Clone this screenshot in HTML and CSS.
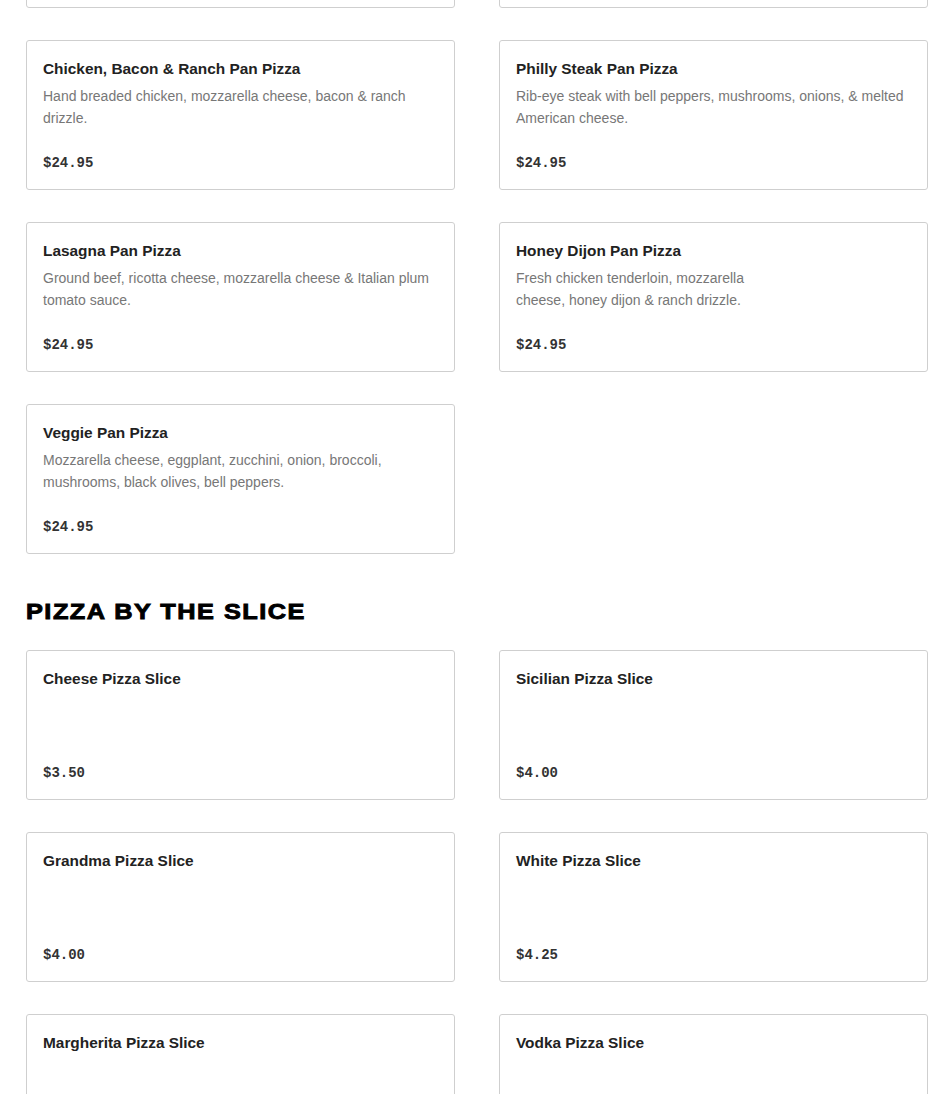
FILE: index.html
```html
<!DOCTYPE html>
<html lang="en">
<head>
    <meta charset="UTF-8">
    <meta name="viewport" content="width=device-width, initial-scale=1.0">
    <title>Menu</title>
    <link rel="stylesheet" href="styles.css">
</head>
<body>
    <div class="menu">
        <section class="menu-section">
            <div class="item-grid">
                <div class="item-card">
                    <h3 class="item-name">Pepperoni Pan Pizza</h3>
                    <p class="item-desc">Mozzarella cheese, pepperoni &amp; tomato sauce.</p>
                    <p class="item-price">$24.95</p>
                </div>
                <div class="item-card">
                    <h3 class="item-name">Buffalo Chicken Pan Pizza</h3>
                    <p class="item-desc">Fried chicken, buffalo sauce, mozzarella cheese &amp; ranch drizzle.</p>
                    <p class="item-price">$24.95</p>
                </div>
                <div class="item-card">
                    <h3 class="item-name">Chicken, Bacon &amp; Ranch Pan Pizza</h3>
                    <p class="item-desc">Hand breaded chicken, mozzarella cheese, bacon &amp; ranch drizzle.</p>
                    <p class="item-price">$24.95</p>
                </div>
                <div class="item-card">
                    <h3 class="item-name">Philly Steak Pan Pizza</h3>
                    <p class="item-desc">Rib-eye steak with bell peppers, mushrooms, onions, &amp; melted American cheese.</p>
                    <p class="item-price">$24.95</p>
                </div>
                <div class="item-card">
                    <h3 class="item-name">Lasagna Pan Pizza</h3>
                    <p class="item-desc">Ground beef, ricotta cheese, mozzarella cheese &amp; Italian plum tomato sauce.</p>
                    <p class="item-price">$24.95</p>
                </div>
                <div class="item-card">
                    <h3 class="item-name">Honey Dijon Pan Pizza</h3>
                    <p class="item-desc">Fresh chicken tenderloin, mozzarella<br>cheese, honey dijon &amp; ranch drizzle.</p>
                    <p class="item-price">$24.95</p>
                </div>
                <div class="item-card">
                    <h3 class="item-name">Veggie Pan Pizza</h3>
                    <p class="item-desc">Mozzarella cheese, eggplant, zucchini, onion, broccoli, mushrooms, black olives, bell peppers.</p>
                    <p class="item-price">$24.95</p>
                </div>
            </div>
        </section>

        <section class="menu-section">
            <h2 class="section-title">PIZZA BY THE SLICE</h2>
            <div class="item-grid">
                <div class="item-card">
                    <h3 class="item-name">Cheese Pizza Slice</h3>
                    <p class="item-price">$3.50</p>
                </div>
                <div class="item-card">
                    <h3 class="item-name">Sicilian Pizza Slice</h3>
                    <p class="item-price">$4.00</p>
                </div>
                <div class="item-card">
                    <h3 class="item-name">Grandma Pizza Slice</h3>
                    <p class="item-price">$4.00</p>
                </div>
                <div class="item-card">
                    <h3 class="item-name">White Pizza Slice</h3>
                    <p class="item-price">$4.25</p>
                </div>
                <div class="item-card">
                    <h3 class="item-name">Margherita Pizza Slice</h3>
                    <p class="item-price">$4.00</p>
                </div>
                <div class="item-card">
                    <h3 class="item-name">Vodka Pizza Slice</h3>
                    <p class="item-price">$4.25</p>
                </div>
            </div>
        </section>
    </div>
</body>
</html>
```

FILE: styles.css
```css
body {
    margin: 0;
    background: #fff;
    color: #222;
    font-family: "Liberation Sans", Arial, sans-serif;
}

.menu {
    padding: 0 22px 0 26px;
    margin-top: -142px;
}

.menu-section {
    margin-bottom: 44px;
}

.section-title {
    width: fit-content;
    margin: 0 0 24px;
    font-family: "Liberation Sans", Arial, sans-serif;
    font-weight: 700;
    font-size: 22px;
    line-height: 28px;
    letter-spacing: 1.3px;
    -webkit-text-stroke: 0.9px #000;
    color: #000;
    transform: scaleX(1.15);
    transform-origin: left center;
}

.item-grid {
    display: grid;
    grid-template-columns: 1fr 1fr;
    column-gap: 44px;
    row-gap: 32px;
}

.item-card {
    display: flex;
    flex-direction: column;
    min-height: 150px;
    box-sizing: border-box;
    padding: 16px 16px 16px;
    border: 1px solid #cfcfcf;
    border-radius: 3px;
}

.item-name {
    margin: 0;
    font-size: 15.4px;
    font-weight: 600;
    line-height: 24px;
    color: #222;
}

.item-desc {
    margin: 4px 0 0;
    font-size: 14px;
    line-height: 22px;
    color: #777;
}

.item-price {
    margin: auto 0 0;
    padding-top: 16px;
    font-family: "Liberation Mono", monospace;
    font-size: 14px;
    font-weight: 700;
    line-height: 20px;
    color: #333;
}
```
